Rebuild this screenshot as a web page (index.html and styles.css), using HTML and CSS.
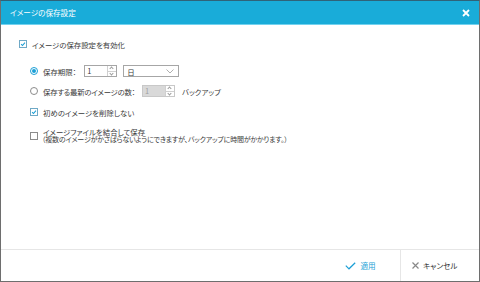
FILE: index.html
```html
<!DOCTYPE html>
<html lang="ja">
  <head>
    <meta charset="utf-8" />
    <title>イメージの保存設定</title>
    <link rel="stylesheet" href="styles.css">
  </head>

  <body>
    <div class="window">
      <div class="titlebar">
        <span class="title">イメージの保存設定</span>
        <svg class="close" width="8" height="8" viewBox="0 0 8 8">
          <path d="M1 1 L7 7 M7 1 L1 7" stroke="#fff" stroke-width="1.8" />
        </svg>
      </div>

      <div class="content">
        <div class="row top_row">
          <span class="check on"><svg viewBox="0 0 8 8"><path d="M1.5 4.2 L3.3 6 L6.6 2.2" /></svg></span>
          <span>イメージの保存設定を有効化</span>
        </div>

        <div class="group">
          <div class="row field_row">
            <span class="radio on"></span>
            <span class="label">保存期限：</span>
            <span class="spin"><span class="value">1</span><span class="arrows"><i class="up"></i><i class="down"></i></span></span>
            <span class="select"><span>日</span><svg viewBox="0 0 8 5"><path d="M0.5 0.5 L4 4 L7.5 0.5" /></svg></span>
          </div>

          <div class="row field_row">
            <span class="radio"></span>
            <span class="label narrow">保存する最新のイメージの数：</span>
            <span class="spin disabled"><span class="value">1</span><span class="arrows"><i class="up"></i><i class="down"></i></span></span>
            <span class="unit">バックアップ</span>
          </div>

          <div class="row keep_row">
            <span class="check on"><svg viewBox="0 0 8 8"><path d="M1.5 4.2 L3.3 6 L6.6 2.2" /></svg></span>
            <span>初めのイメージを削除しない</span>
          </div>

          <div class="row merge_row">
            <span class="check"></span>
            <span class="lines">
              <span>イメージファイルを結合して保存</span>
              <span class="note">（複数のイメージがかさばらないようにできますが、バックアップに時間がかかります。）</span>
            </span>
          </div>
        </div>
      </div>

      <div class="footer">
        <button class="btn apply">
          <svg width="11" height="8" viewBox="0 0 11 8"><path d="M0.8 3.6 L4 6.8 L10.2 0.8" /></svg>
          適用
        </button>
        <button class="btn cancel">
          <svg width="7" height="7" viewBox="0 0 7 7"><path d="M0.5 0.5 L6.5 6.5 M6.5 0.5 L0.5 6.5" /></svg>
          キャンセル
        </button>
      </div>
    </div>
  </body>
</html>
```

FILE: styles.css
```css
html, body
{
  margin: 0;
  padding: 0;
  background-color: #fff;
}
body
{
  font-family: "Noto Sans CJK JP", "Noto Sans", sans-serif;
  font-feature-settings: "palt";
  font-size: 7.4px;
  color: #3a3a3a;
}
.window
{
  box-sizing: border-box;
  width: 480px;
  height: 282px;
  border: 1px solid #6e6e6e;
  border-top-color: #2f6379;
  display: flex;
  flex-direction: column;
}
.titlebar
{
  height: 23px;
  flex: none;
  background-color: #19acd9;
  border-bottom: 1px solid #72d2ef;
  display: flex;
  align-items: center;
  justify-content: space-between;
  padding: 0 9px 0 9px;
  color: #fff;
}
.title
{
  font-size: 7.6px;
}
.close
{
  display: block;
}
.content
{
  flex: 1;
  padding: 14px 0 0 18px;
}
.row
{
  display: flex;
  align-items: center;
}
.top_row
{
  height: 10px;
}
.group
{
  padding-left: 11px;
}
.field_row
{
  height: 12px;
  margin-top: 16px;
}
.field_row + .field_row
{
  margin-top: 8px;
}
.keep_row
{
  height: 10px;
  margin-top: 10px;
}
.merge_row
{
  margin-top: 11px;
}
.check
{
  box-sizing: border-box;
  width: 8px;
  height: 8px;
  border: 1px solid #8c8c8c;
  background-color: #fff;
  margin-right: 5px;
  flex: none;
}
.check svg
{
  display: block;
  width: 6px;
  height: 6px;
  fill: none;
  stroke: #1b9fd6;
  stroke-width: 1.4;
}
.check.on
{
  border-color: #6fa9c6;
}
.radio
{
  box-sizing: border-box;
  width: 8px;
  height: 8px;
  border: 1px solid #8c8c8c;
  border-radius: 50%;
  margin-right: 5px;
  flex: none;
  display: flex;
  align-items: center;
  justify-content: center;
}
.radio.on
{
  border-color: #1b9fd6;
}
.radio.on::after
{
  content: "";
  width: 4px;
  height: 4px;
  border-radius: 50%;
  background-color: #1b9fd6;
}
.label
{
  margin-right: 8px;
}
.label.narrow
{
  letter-spacing: -0.25px;
  margin-right: 7px;
}
.spin
{
  box-sizing: border-box;
  width: 33px;
  height: 12px;
  border: 1px solid #a6a6a6;
  display: flex;
  background-color: #fff;
}
.spin .value
{
  flex: 1;
  padding-left: 2px;
  line-height: 10px;
}
.spin .arrows
{
  width: 8px;
  border-left: 1px solid #d0d0d0;
  display: flex;
  flex-direction: column;
  background-color: #fff;
}
.spin i
{
  flex: 1;
  position: relative;
}
.spin i + i
{
  border-top: 1px solid #d0d0d0;
}
.spin i::after
{
  content: "";
  position: absolute;
  left: 2px;
  top: 1px;
  width: 2px;
  height: 2px;
  border-left: 1px solid #9a9a9a;
  border-top: 1px solid #9a9a9a;
  transform: rotate(45deg);
}
.spin i.down::after
{
  top: 0;
  transform: rotate(225deg);
}
.spin.disabled
{
  background-color: #d9d9d9;
  border-color: #c8c8c8;
}
.spin.disabled .value
{
  color: #a0a0a0;
}
.select
{
  box-sizing: border-box;
  width: 56px;
  height: 12px;
  margin-left: 6px;
  border: 1px solid #a6a6a6;
  display: flex;
  align-items: center;
  justify-content: space-between;
  padding: 0 4px 0 3px;
}
.select svg
{
  width: 8px;
  height: 5px;
  fill: none;
  stroke: #9a9a9a;
  stroke-width: 0.8;
}
.unit
{
  margin-left: 7px;
}
.merge_row .check
{
  margin-top: 1px;
}
.lines
{
  display: flex;
  flex-direction: column;
  line-height: 7.6px;
}
.note
{
  font-size: 7px;
  letter-spacing: -0.2px;
  margin-left: -1px;
}
.footer
{
  height: 31px;
  flex: none;
  border-top: 1px solid #e6e6e6;
  display: flex;
  justify-content: flex-end;
}
.btn
{
  width: 79px;
  border: none;
  background-color: #fff;
  font-family: inherit;
  font-feature-settings: "palt";
  font-size: 7.6px;
  display: flex;
  align-items: center;
  justify-content: center;
  gap: 4px;
  padding: 0;
}
.btn svg
{
  fill: none;
  stroke-width: 1.2;
}
.apply
{
  color: #1b9fd6;
}
.apply svg
{
  stroke: #1b9fd6;
}
.cancel
{
  border-left: 1px solid #e6e6e6;
  color: #333;
  justify-content: flex-start;
  padding-left: 11px;
}
.cancel svg
{
  stroke: #888;
}
```
